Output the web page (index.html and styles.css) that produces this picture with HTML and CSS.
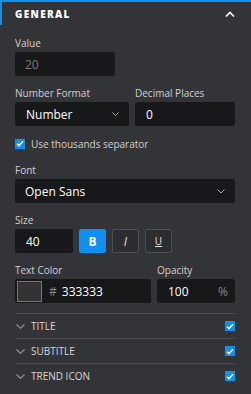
FILE: index.html
```html
<!doctype html>
<html lang="en">
<head>
    <meta charset="UTF-8">
    <meta name="viewport" content="width=device-width, initial-scale=1.0">
    <title>General</title>
    <link rel="stylesheet" href="styles.css">
</head>
<body>
    <div class="panel">
        <div class="head">
            <span class="head-title">GENERAL</span>
            <svg class="head-arrow" width="10" height="6" viewBox="0 0 10 6"><path d="M1 5.5L5 1.5L9 5.5" fill="none" stroke="#fff" stroke-width="1.6"/></svg>
        </div>
        <div class="body">
            <div class="field">
                <div class="label">Value</div>
                <div class="input input-value disabled">20</div>
            </div>

            <div class="field row">
                <div class="col col-format">
                    <div class="label">Number Format</div>
                    <div class="input select">
                        <span>Number</span>
                        <svg width="7" height="4" viewBox="0 0 7 4"><path d="M0.5 0.5L3.5 3.5L6.5 0.5" fill="none" stroke="#aaa" stroke-width="1"/></svg>
                    </div>
                </div>
                <div class="col col-decimal">
                    <div class="label">Decimal Places</div>
                    <div class="input">0</div>
                </div>
            </div>

            <label class="check-line">
                <span class="check"><svg width="8" height="7" viewBox="0 0 8 7"><path d="M1 3.8L3 5.6L7 1.2" fill="none" stroke="#fff" stroke-width="1.5"/></svg></span>
                Use thousands separator
            </label>

            <div class="field field-font">
                <div class="label">Font</div>
                <div class="input select">
                    <span>Open Sans</span>
                    <svg width="8" height="5" viewBox="0 0 8 5"><path d="M0.5 0.5L4 4L7.5 0.5" fill="none" stroke="#aaa" stroke-width="1"/></svg>
                </div>
            </div>

            <div class="field">
                <div class="label">Size</div>
                <div class="row">
                    <div class="input input-size">40</div>
                    <div class="btn active"><b>B</b></div>
                    <div class="btn"><i>I</i></div>
                    <div class="btn"><u>U</u></div>
                </div>
            </div>

            <div class="field row">
                <div class="col col-color">
                    <div class="label">Text Color</div>
                    <div class="input color">
                        <span class="swatch"></span>
                        <span class="hash">#</span>
                        <span>333333</span>
                    </div>
                </div>
                <div class="col col-opacity">
                    <div class="label">Opacity</div>
                    <div class="input opacity">
                        <span>100</span>
                        <span class="unit">%</span>
                    </div>
                </div>
            </div>

            <div class="sections">
                <div class="section">
                    <svg width="9" height="5" viewBox="0 0 9 5"><path d="M0.5 0.5L4.5 4.3L8.5 0.5" fill="none" stroke="#999" stroke-width="1.1"/></svg>
                    <span class="section-name">TITLE</span>
                    <span class="check"><svg width="8" height="7" viewBox="0 0 8 7"><path d="M1 3.8L3 5.6L7 1.2" fill="none" stroke="#fff" stroke-width="1.5"/></svg></span>
                </div>
                <div class="section">
                    <svg width="9" height="5" viewBox="0 0 9 5"><path d="M0.5 0.5L4.5 4.3L8.5 0.5" fill="none" stroke="#999" stroke-width="1.1"/></svg>
                    <span class="section-name">SUBTITLE</span>
                    <span class="check"><svg width="8" height="7" viewBox="0 0 8 7"><path d="M1 3.8L3 5.6L7 1.2" fill="none" stroke="#fff" stroke-width="1.5"/></svg></span>
                </div>
                <div class="section">
                    <svg width="9" height="5" viewBox="0 0 9 5"><path d="M0.5 0.5L4.5 4.3L8.5 0.5" fill="none" stroke="#999" stroke-width="1.1"/></svg>
                    <span class="section-name">TREND ICON</span>
                    <span class="check"><svg width="8" height="7" viewBox="0 0 8 7"><path d="M1 3.8L3 5.6L7 1.2" fill="none" stroke="#fff" stroke-width="1.5"/></svg></span>
                </div>
            </div>
        </div>
    </div>
</body>
</html>
```

FILE: styles.css
```css
*{padding: 0;margin: 0;box-sizing: border-box}
body{
    background: #333437;
    font-family: "Open Sans", "Noto Sans", sans-serif;
    color: #d4d4d4;
}
.panel{
    width: 251px;
    height: 394px;
    background: #333437;
}
.head{
    height: 25px;
    border-top: 2px solid #0f8ff0;
    border-left: 2px solid #0f8ff0;
    display: flex;
    align-items: center;
    justify-content: space-between;
    padding: 0 16px 0 13px;
}
.head-title{
    font-size: 10px;
    font-weight: 800;
    letter-spacing: 1.3px;
    color: #fff;
}
.body{
    padding: 0 16px 0 15px;
}
.field{
    margin-top: 12px;
}
.field + .field{margin-top: 11px}
.label{
    font-size: 10px;
    line-height: 13px;
    margin-bottom: 2px;
    color: #d0d0d0;
}
.row{
    display: flex;
    gap: 6px;
}
.input{
    height: 24px;
    background: #17181a;
    border-radius: 2px;
    font-size: 12px;
    color: #fff;
    display: flex;
    align-items: center;
    padding: 0 11px;
}
.input.disabled{color: #777}
.input-value{width: 100px;padding-left: 10px}
.col-format{width: 114px}
.col-decimal{flex: 1}
.select{
    justify-content: space-between;
    padding: 0 10px 0 11px;
}
.field-font .select{padding-left: 10px}
.check-line{
    display: flex;
    align-items: center;
    gap: 6px;
    font-size: 10px;
    height: 13px;
    margin-top: 11px;
    color: #d0d0d0;
}
.check{
    width: 10px;
    height: 10px;
    background: #0f8ff0;
    display: flex;
    align-items: center;
    justify-content: center;
}
.field-font{margin-top: 14px}
.input-size{width: 58px;padding-left: 11px}
.btn{
    width: 27px;
    height: 24px;
    border: 1px solid #4f5053;
    border-radius: 2px;
    background: #2c2d30;
    color: #e0e0e0;
    font-size: 11px;
    display: flex;
    align-items: center;
    justify-content: center;
}
.btn.active{
    background: #0f8ff0;
    border-color: #0f8ff0;
    color: #fff;
}
.btn b{font-weight: 700;font-size: 12px}
.btn i{font-size: 12px}
.btn u{font-size: 10px}
.col-color{width: 136px}
.col-opacity{flex: 1}
.color{padding: 0 0 0 2px}
.swatch{
    width: 25px;
    height: 21px;
    border: 1px solid #747578;
    background: #333333;
    margin-right: 7px;
}
.hash{color: #888;margin-right: 5px}
.opacity{
    justify-content: space-between;
    padding: 0 7px 0 11px;
}
.unit{color: #888}
.sections{
    margin-top: 10px;
}
.section{
    height: 25px;
    border-top: 1px solid #4b4c4f;
    display: flex;
    align-items: center;
    padding-left: 1px;
}
.section-name{
    flex: 1;
    font-size: 10px;
    margin-left: 6px;
    color: #d8d8d8;
}
```
